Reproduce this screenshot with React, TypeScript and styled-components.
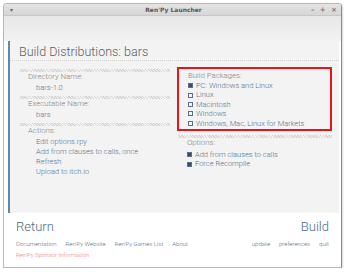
import * as React from "react";
import styled, { createGlobalStyle } from "styled-components";

const GlobalStyle = createGlobalStyle`
  html, body {
    margin: 0;
    padding: 0;
    background: #ffffff;
  }
  body {
    font-family: Roboto, "Liberation Sans", sans-serif;
    font-weight: 300;
  }
`;

const packages = [
  { label: "PC: Windows and Linux", checked: true },
  { label: "Linux", checked: false },
  { label: "Macintosh", checked: false },
  { label: "Windows", checked: false },
  { label: "Windows, Mac, Linux for Markets", checked: false },
];

const options = [
  { label: "Add from clauses to calls", checked: true },
  { label: "Force Recompile", checked: true },
];

const actions = [
  "Edit options.rpy",
  "Add from clauses to calls, once",
  "Refresh",
  "Upload to itch.io",
];

function App() {
  return (
    <>
      <GlobalStyle />
      <Window>
        <TitleBar>
          <TitleMenu>▾</TitleMenu>
          <TitleText>Ren'Py Launcher</TitleText>
          <TitleControls>
            <span>–</span>
            <span>+</span>
            <span>×</span>
          </TitleControls>
        </TitleBar>
        <Body>
          <Header />
          <Panel>
            <PanelTitle>Build Distributions: bars</PanelTitle>
            <Columns>
              <Column>
                <Section>
                  <Hatch />
                  <Label>Directory Name:</Label>
                  <Value>bars-1.0</Value>
                </Section>
                <Section>
                  <Hatch />
                  <Label>Executable Name:</Label>
                  <Value>bars</Value>
                </Section>
                <Section>
                  <Hatch />
                  <Label>Actions:</Label>
                  <Actions>
                    {actions.map((a) => (
                      <Action key={a}>{a}</Action>
                    ))}
                  </Actions>
                </Section>
              </Column>
              <Column>
                <Highlight>
                  <Label $right>Build Packages:</Label>
                  <Checks>
                    {packages.map((p) => (
                      <Check key={p.label}>
                        <Box $checked={p.checked} />
                        {p.label}
                      </Check>
                    ))}
                  </Checks>
                </Highlight>
                <Section>
                  <Hatch />
                  <Label $right>Options:</Label>
                  <Checks $indent>
                    {options.map((o) => (
                      <Check key={o.label}>
                        <Box $checked={o.checked} />
                        {o.label}
                      </Check>
                    ))}
                  </Checks>
                </Section>
              </Column>
            </Columns>
          </Panel>
          <Footer>
            <BigRow>
              <BigLink>Return</BigLink>
              <BigLink>Build</BigLink>
            </BigRow>
            <LinkRow>
              <Links>
                <SmallLink>Documentation</SmallLink>
                <SmallLink>Ren'Py Website</SmallLink>
                <SmallLink>Ren'Py Games List</SmallLink>
                <SmallLink>About</SmallLink>
              </Links>
              <Links>
                <SmallLink>update</SmallLink>
                <SmallLink>preferences</SmallLink>
                <SmallLink>quit</SmallLink>
              </Links>
            </LinkRow>
            <Sponsor>Ren'Py Sponsor Information</Sponsor>
          </Footer>
        </Body>
      </Window>
    </>
  );
}

const Window = styled.div`
  margin: 3px 0 0 3px;
  width: 339px;
  height: 265px;
  box-sizing: border-box;
  border: 1px solid #b8b8b8;
  border-right-color: #8a8a8a;
  border-radius: 4px 4px 0 0;
  box-shadow: 1px 1px 2px rgba(0, 0, 0, 0.15);
  display: flex;
  flex-direction: column;
  overflow: hidden;
  background: #ffffff;
`;

const TitleBar = styled.div`
  height: 11px;
  flex: none;
  display: flex;
  align-items: center;
  justify-content: space-between;
  padding: 0 4px 0 6px;
  background: linear-gradient(#e4e4e4, #d6d6d6);
  border-bottom: 1px solid #c8c8c8;
  font-family: "DejaVu Sans", sans-serif;
  font-size: 6px;
  font-weight: 700;
  color: #555;
`;

const TitleMenu = styled.span`
  width: 26px;
  font-size: 6px;
  color: #666;
`;

const TitleText = styled.span``;

const TitleControls = styled.span`
  width: 26px;
  display: flex;
  justify-content: space-between;
  color: #777;
  font-size: 7px;
`;

const Body = styled.div`
  flex: 1;
  display: flex;
  flex-direction: column;
`;

const Header = styled.div`
  height: 25px;
  flex: none;
  background: linear-gradient(#e7e7e7, #f2f2f2);
`;

const Panel = styled.div`
  height: 172px;
  flex: none;
  box-sizing: border-box;
  margin: 0 2px 0 4px;
  border-left: 2px solid #5c88b4;
  background: #f3f3f3;
  display: flex;
  flex-direction: column;
`;

const PanelTitle = styled.div`
  margin-top: 3px;
  padding: 0 0 1px 9px;
  border-bottom: 1px dotted #d0d0d0;
  font-size: 12.5px;
  color: #5a5f66;
  line-height: 15px;
`;

const Columns = styled.div`
  display: grid;
  grid-template-columns: 150px 154px;
  column-gap: 8px;
  padding: 8px 0 0 10px;
`;

const Column = styled.div`
  display: flex;
  flex-direction: column;
`;

const Section = styled.div`
  display: flex;
  flex-direction: column;
  margin-bottom: 3px;
`;

const Hatch = styled.div`
  height: 3px;
  background: repeating-linear-gradient(
    45deg,
    #d4d4d4 0 1px,
    #f3f3f3 1px 2px
  );
`;

const Label = styled.div<{ $right?: boolean }>`
  padding-left: ${(p) => (p.$right ? "9px" : "8px")};
  font-size: 7.8px;
  line-height: 10px;
  color: #858585;
`;

const Value = styled.div`
  margin-top: 1px;
  padding-left: 16px;
  font-size: 7.5px;
  line-height: 10px;
  color: #566f8c;
`;

const Actions = styled.div`
  margin-top: 1px;
  display: flex;
  flex-direction: column;
`;

const Action = styled(Value)`
  margin-top: 0;
`;

const Highlight = styled.div`
  margin: -2px 0 4px -1px;
  height: 64px;
  box-sizing: border-box;
  border: 2px solid #e8141c;
  padding: 2px 0 0 0;
`;

const Checks = styled.div<{ $indent?: boolean }>`
  display: flex;
  flex-direction: column;
  margin-top: ${(p) => (p.$indent ? "2px" : "0")};
  padding-left: 9px;
`;

const Check = styled.div`
  display: flex;
  align-items: center;
  gap: 3px;
  font-size: 7.5px;
  line-height: 9.4px;
  color: #566f8c;
`;

const Box = styled.span<{ $checked: boolean }>`
  width: 5px;
  height: 5px;
  flex: none;
  box-sizing: border-box;
  border: 1px solid #566f8c;
  background: ${(p) => (p.$checked ? "#34506e" : "transparent")};
`;

const Footer = styled.div`
  display: flex;
  flex-direction: column;
  padding: 5px 12px 0 12px;
`;

const BigRow = styled.div`
  display: flex;
  justify-content: space-between;
`;

const BigLink = styled.div`
  font-size: 13px;
  line-height: 17px;
  color: #4f6a88;
`;

const LinkRow = styled.div`
  display: flex;
  justify-content: space-between;
  margin-top: 4px;
`;

const Links = styled.div`
  display: flex;
  gap: 9px;
`;

const SmallLink = styled.span`
  font-size: 6px;
  line-height: 10px;
  color: #5a7088;
`;

const Sponsor = styled.div`
  font-size: 6px;
  line-height: 12px;
  color: #f07a7a;
`;

export default App;
